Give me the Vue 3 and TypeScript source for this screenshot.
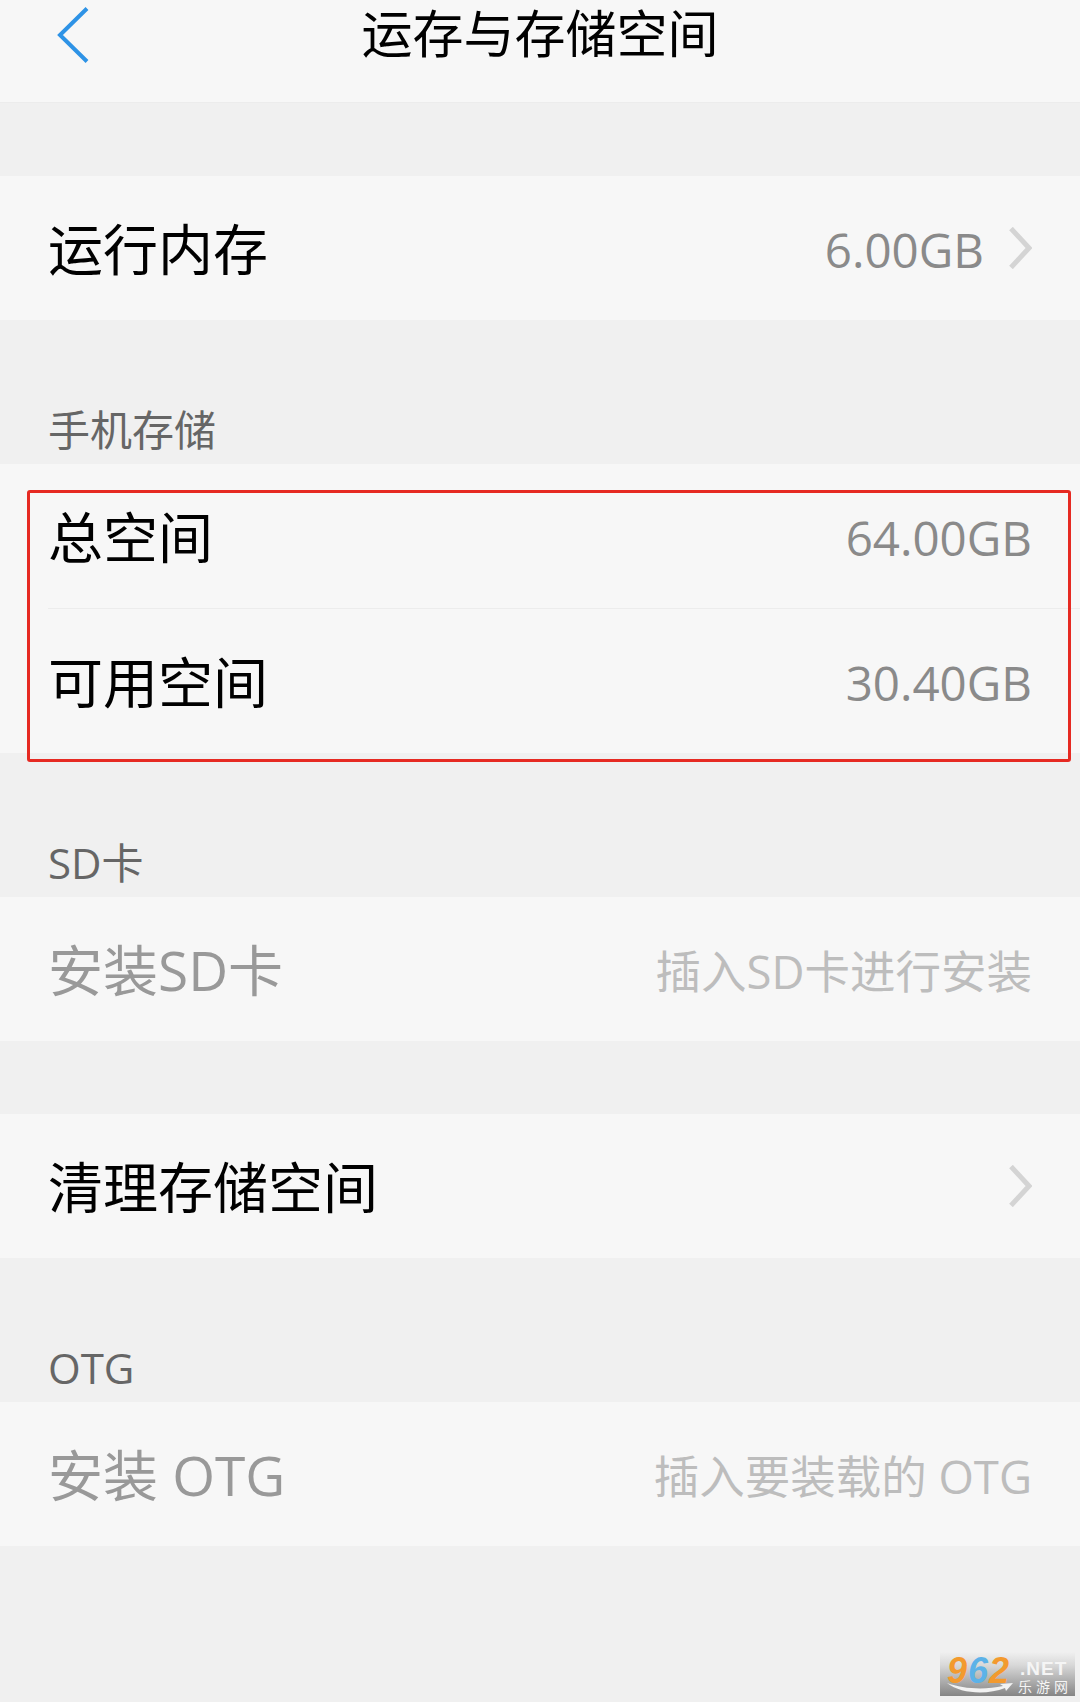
<script setup lang="ts">
interface Row {
  name: string;
  value?: string;
  arrow?: boolean;
  disabled?: boolean;
}

interface Group {
  label?: string;
  rows: Row[];
}

const groups: Group[] = [
  { rows: [{ name: '运行内存', value: '6.00GB', arrow: true }] },
  {
    label: '手机存储',
    rows: [
      { name: '总空间', value: '64.00GB' },
      { name: '可用空间', value: '30.40GB' },
    ],
  },
  { label: 'SD卡', rows: [{ name: '安装SD卡', value: '插入SD卡进行安装', disabled: true }] },
  { rows: [{ name: '清理存储空间', arrow: true }] },
  { label: 'OTG', rows: [{ name: '安装 OTG', value: '插入要装载的 OTG', disabled: true }] },
];
</script>

<template>
  <div class="page">
    <header class="top">
      <svg class="back" width="32" height="56" viewBox="0 0 32 56">
        <path d="M30 1.5 3 28l27 26.5" fill="none" stroke="#2e93e6" stroke-width="4" />
      </svg>
      <h1 class="title">运存与存储空间</h1>
    </header>

    <section v-for="(group, i) in groups" :key="i" class="group">
      <div class="group-head" :class="{ labeled: group.label }">
        <span v-if="group.label">{{ group.label }}</span>
      </div>
      <div class="card">
        <div v-for="row in group.rows" :key="row.name" class="row" :class="{ disabled: row.disabled }">
          <span class="name">{{ row.name }}</span>
          <span v-if="row.value" class="value">{{ row.value }}</span>
          <svg v-if="row.arrow" class="arrow" width="24" height="42" viewBox="0 0 24 42">
            <path d="M3 1.5 21 21 3 40.5" fill="none" stroke="#d4d4d4" stroke-width="5" />
          </svg>
        </div>
      </div>
    </section>

    <div class="highlight"></div>

    <div class="mark">
      <span class="mark-num"><i>9</i><b>6</b><i>2</i></span>
      <span class="mark-net">.NET</span>
      <svg class="mark-arc" width="66" height="11" viewBox="0 0 66 11">
        <path d="M0 0C16 6 38 7 56 3l-3-2 13-1-7 8-1-3C40 12 14 11 0 0Z" fill="#f2f2f2" />
      </svg>
      <span class="mark-cn">乐游网</span>
    </div>
  </div>
</template>

<style scoped>
.page {
  position: relative;
  height: 1702px;
  overflow: hidden;
  background: #f0f0f0;
  font-family: "Open Sans", "Noto Sans CJK SC", sans-serif;
}

.top {
  position: relative;
  height: 102px;
  background: #f7f7f7;
  border-bottom: 1px solid #ececec;
}

.back {
  position: absolute;
  left: 57px;
  top: 7px;
}

.title {
  margin: 0;
  padding-top: 2px;
  font-size: 51px;
  line-height: 62px;
  font-weight: 400;
  color: #000;
  text-align: center;
}

.group-head {
  height: 73px;
}

.group-head.labeled {
  height: 144px;
  display: flex;
  align-items: flex-end;
  padding: 0 48px 6px;
  box-sizing: border-box;
  font-size: 42px;
  line-height: 56px;
  color: #666;
}

.card {
  background: #f7f7f7;
}

.row {
  display: flex;
  align-items: center;
  height: 144px;
  margin-left: 48px;
  padding-right: 48px;
  box-sizing: border-box;
}

.row + .row {
  height: 145px;
  border-top: 1px solid #ececec;
}

.name {
  flex: 1;
  font-size: 55px;
  line-height: 70px;
  padding-top: 2px;
  color: #000;
}

.value {
  font-size: 47.5px;
  line-height: 60px;
  padding-top: 3px;
  color: #8a8a8a;
}

.arrow {
  margin-left: 24px;
}

.disabled .name {
  color: #999;
}

.disabled .value {
  font-size: 45.5px;
  color: #bdbdbd;
}

.highlight {
  position: absolute;
  left: 27px;
  top: 490px;
  width: 1044px;
  height: 272px;
  box-sizing: border-box;
  border: 3px solid #e62a22;
  border-radius: 3px;
}

.mark {
  position: absolute;
  left: 940px;
  top: 1652px;
  width: 135px;
  height: 44px;
  background: linear-gradient(#f0f0f0, #d8d8d8 30%, #858585);
  font-family: "Liberation Sans", "Noto Sans CJK SC", sans-serif;
}

.mark-num {
  position: absolute;
  left: 7px;
  top: 1px;
  font-size: 36px;
  line-height: 36px;
  font-weight: 700;
  font-style: italic;
  letter-spacing: 1px;
  color: #f39a2e;
}

.mark-num i {
  font-style: inherit;
}

.mark-num b {
  color: #5cb2e8;
}

.mark-net {
  position: absolute;
  left: 80px;
  top: 7px;
  font-size: 19px;
  line-height: 20px;
  font-weight: 700;
  letter-spacing: 1px;
  color: #f5f5f5;
}

.mark-arc {
  position: absolute;
  left: 7px;
  top: 31px;
}

.mark-cn {
  position: absolute;
  left: 78px;
  top: 27px;
  font-size: 14px;
  line-height: 16px;
  letter-spacing: 4px;
  color: #f5f5f5;
}
</style>
